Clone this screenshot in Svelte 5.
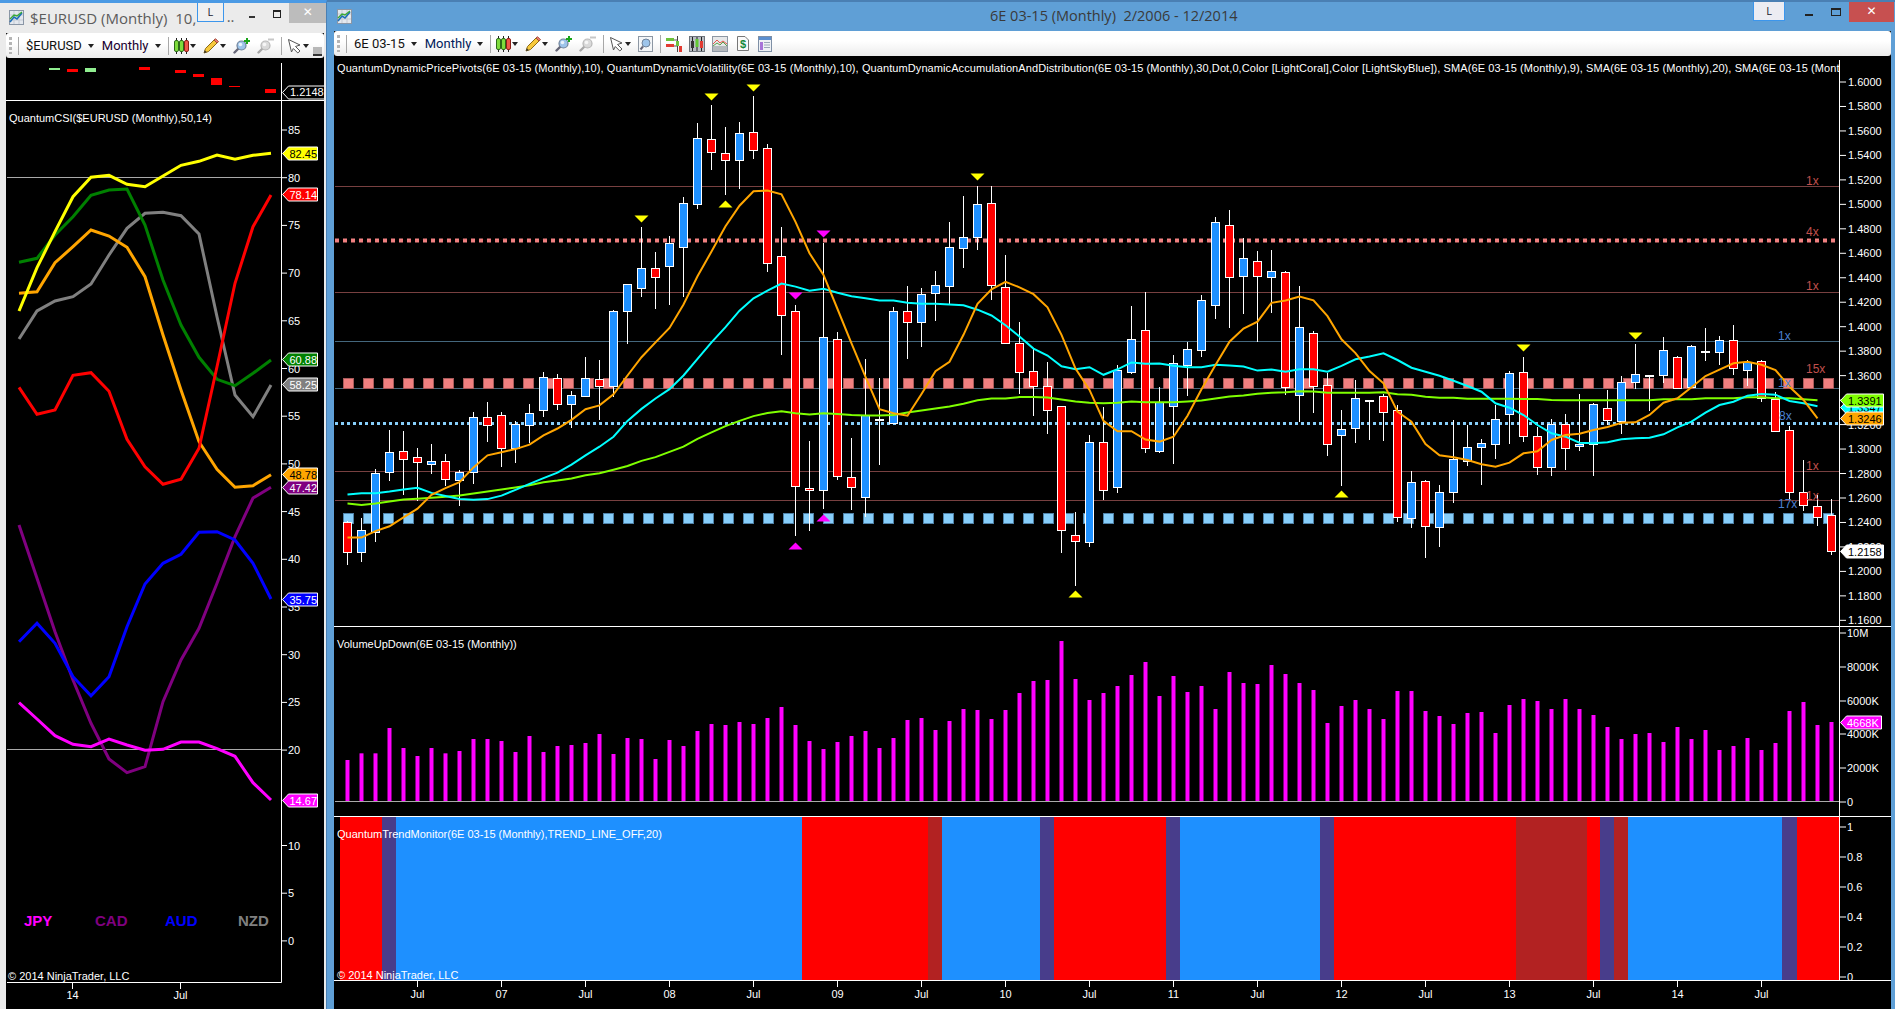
<script>
// reading a crop of the chart back to screen pixels: first 74 bars / last 33 bars
const ya = (z) => Math.round(80 + z / 2.904);
const yc = (z) => Math.round(300 + z / 3);
const barX = (i) => 347 + 14 * i;

// wick top, body top, body bottom, wick bottom, kind (b = up, r = down, d = doji)
const barsA = [
  [1280,1284,1372,1408,'r'],[1272,1308,1370,1400,'b'],[1130,1142,1312,1342,'b'],[1016,1081,1139,1164,'b'],
  [1019,1078,1100,1205,'r'],[1069,1096,1110,1222,'r'],[1057,1107,1114,1144,'b'],[1086,1107,1160,1180,'r'],
  [1132,1139,1163,1237,'b'],[965,978,1139,1173,'b'],[935,980,1003,1050,'r'],[965,974,1068,1124,'r'],
  [990,1000,1070,1112,'b'],[941,966,1003,1055,'b'],[848,863,957,979,'b'],[854,866,940,958,'r'],
  [903,916,940,1010,'b'],[804,866,917,920,'b'],[813,869,890,987,'r'],[668,672,890,920,'b'],
  [593,593,672,767,'b'],[427,547,603,630,'b'],[499,547,571,665,'r'],[453,474,539,653,'b'],
  [340,358,484,630,'b'],[125,167,359,375,'b'],[73,172,208,261,'r'],[136,213,231,334,'r'],
  [122,155,231,317,'b'],[46,152,202,229,'r'],[186,198,530,558,'r'],[427,512,681,799,'r'],
  [654,672,1178,1324,'r'],[1048,1186,1192,1310,'r'],[473,747,1190,1246,'b'],[732,753,1149,1161,'r'],
  [1040,1154,1181,1249,'r'],[810,972,1210,1269,'b'],[865,984,984,1118,'d'],[660,672,995,1000,'b'],
  [598,672,702,810,'r'],[604,622,702,775,'b'],[555,596,620,700,'b'],[412,486,597,650,'b'],
  [337,457,487,546,'b'],[308,361,455,494,'b'],[308,358,594,639,'r'],[508,600,763,763,'r'],
  [703,763,847,912,'r'],[780,846,888,976,'r'],[820,888,957,1028,'r'],[948,948,1308,1373,'r'],
  [1254,1322,1338,1469,'r'],[1032,1050,1341,1356,'b'],[950,1050,1190,1220,'r'],[828,843,1181,1199,'b'],
  [656,753,847,853,'b'],[617,727,1068,1083,'r'],[892,936,1076,1083,'b'],[799,823,946,1115,'b'],
  [761,782,827,918,'b'],[624,640,783,804,'b'],[398,413,652,694,'b'],[377,420,571,720,'r'],
  [460,518,568,679,'b'],[497,527,568,761,'r'],[494,556,571,677,'b'],[555,559,892,915,'r'],
  [598,716,916,994,'b'],[730,736,888,967,'r'],[850,885,1056,1092,'r'],[958,1014,1030,1179,'b'],
  [871,924,1012,1054,'b'],[928,928,928,1045,'d']
];
const barsC = [
  [283,289,335,423,'r'],[315,331,652,665,'r'],[513,547,655,684,'b'],[541,544,677,773,'r'],
  [555,577,680,740,'b'],[360,478,577,608,'b'],[375,442,483,498,'b'],[418,430,442,554,'b'],
  [315,358,431,476,'b'],[214,220,341,431,'b'],[171,217,409,426,'r'],[380,409,500,525,'r'],
  [358,373,502,527,'b'],[342,373,443,510,'r'],[283,431,438,453,'b'],[310,313,433,527,'b'],
  [270,325,361,375,'r'],[228,247,362,402,'b'],[132,223,247,267,'b'],[224,224,224,333,'d'],
  [111,151,224,249,'b'],[168,172,263,263,'r'],[135,139,260,262,'b'],[84,153,153,183,'d'],
  [108,121,155,195,'b'],[75,121,205,225,'r'],[180,185,209,258,'b'],[180,184,293,305,'r'],
  [275,297,392,392,'r'],[378,391,577,598,'r'],[480,577,616,633,'r'],[585,619,650,678,'r'],
  [597,646,754,765,'r']
];
const candles = [
  ...barsA.map(([a, b, c, d, k]) => ({ hi: ya(a), top: ya(b), bot: ya(c), lo: ya(d), k })),
  ...barsC.map(([a, b, c, d, k]) => ({ hi: yc(a), top: yc(b), bot: yc(c), lo: yc(d), k }))
];

function sma(a, c) {
  const ys = [...a.map((z) => 80 + z / 2.904), ...c.map((z) => 300 + z / 3)];
  return ys.map((y, i) => `${barX(i) + 0.5},${y.toFixed(1)}`).join(' ');
}

const smaOrange = sma(
  [1329,1329,1310,1296,1270,1245,1205,1185,1168,1125,1090,1081,1072,1059,1032,1012,987,956,945,913,858,805,762,720,652,570,498,425,365,323,321,332,412,503,566,665,765,
   862,956,968,975,912,846,818,740,650,608,586,602,622,660,740,838,900,990,1020,1020,1044,1050,1036,975,898,828,760,722,702,647,640,629,640,686,753,793,845],
  [250,335,365,432,466,472,480,493,500,488,460,454,420,405,401,390,381,368,367,345,308,295,262,228,209,190,185,194,210,260,300,355]
);
const smaCyan = sma(
  [1204,1200,1200,1195,1189,1184,1199,1208,1217,1219,1217,1207,1190,1173,1156,1140,1117,1090,1065,1036,990,955,925,898,858,810,762,718,670,634,612,591,600,612,606,618,628,
   634,640,640,647,650,650,652,654,667,684,712,745,780,800,831,840,834,856,840,820,824,823,830,834,834,827,829,832,844,841,847,840,840,847,830,811,803],
  [160,180,203,215,227,242,258,275,310,323,345,375,400,410,428,430,427,418,415,413,403,382,365,338,315,305,287,282,284,303,310,319]
);
const smaGreen = sma(
  [1230,1234,1230,1224,1218,1216,1213,1210,1207,1201,1195,1189,1183,1177,1168,1163,1157,1148,1142,1132,1121,1106,1095,1080,1065,1042,1023,1005,990,976,967,962,968,971,968,970,973,
   974,974,973,966,960,954,948,940,930,925,925,921,921,922,928,934,937,939,937,934,936,936,936,934,931,925,919,916,911,908,907,904,905,908,908,908,908],
  [277,283,284,290,293,293,296,296,296,296,297,297,300,301,301,301,301,301,301,301,298,298,298,295,295,295,292,292,295,295,298,301]
);

const triangles = [
  [21, ya(403), 'd', 'yellow'], [26, ya(48), 'd', 'yellow'], [29, ya(22), 'd', 'yellow'], [27, ya(360), 'u', 'yellow'],
  [32, ya(627), 'd', 'magenta'], [32, ya(1352), 'u', 'magenta'], [34, ya(446), 'd', 'magenta'], [34, ya(1273), 'u', 'magenta'],
  [45, ya(281), 'd', 'yellow'], [52, ya(1494), 'u', 'yellow'], [71, ya(1203), 'u', 'yellow'],
  [84, yc(143), 'd', 'yellow'], [92, yc(107), 'd', 'yellow']
];
function triPoints(i, y, dir) {
  const x = barX(i) + 0.5;
  return dir === 'd'
    ? `${x - 7},${y - 3.5} ${x + 7},${y - 3.5} ${x},${y + 3.5}`
    : `${x - 7},${y + 3.5} ${x + 7},${y + 3.5} ${x},${y - 3.5}`;
}

const pivotLines = [
  [186.5, '#784040'], [292.5, '#784040'], [341.5, '#44677d'], [388.5, '#44677d'], [471.5, '#784040'], [500.5, '#784040']
];
const squares = Array.from({ length: 75 }, (_, i) => 343 + 20 * i);
const pivotTags = [
  [1806, 185, '1x', '#c0504d'], [1806, 236, '4x', '#c0504d'], [1806, 290, '1x', '#c0504d'], [1778, 340, '1x', '#4b80d2'],
  [1806, 373, '15x', '#c0504d'], [1778, 387, '1x', '#4b80d2'], [1779, 420, '8x', '#4b80d2'], [1806, 470, '1x', '#c0504d'],
  [1806, 500, '1x', '#c0504d'], [1778, 508, '17x', '#4b80d2']
];

const priceTicks = Array.from({ length: 23 }, (_, i) => ({ y: 82 + i * 24.47, t: (1.6 - i * 0.02).toFixed(4) }));
const volTicks = [[633, '10M'], [667, '8000K'], [701, '6000K'], [734, '4000K'], [768, '2000K'], [802, '0']];
const trendTicks = [[827, '1'], [857, '0.8'], [887, '0.6'], [917, '0.4'], [947, '0.2'], [977, '0']];
const timeTicks = ['Jul', '07', 'Jul', '08', 'Jul', '09', 'Jul', '10', 'Jul', '11', 'Jul', '12', 'Jul', '13', 'Jul', '14', 'Jul'];

// bar tops, measured on the 3x crops
const volTop = [420,400,400,324,384,408,384,400,393,357,357,363,396,348,396,378,375,369,342,402,354,357,417,360,378,333,312,315,306,312,294,261,315,363,387,366,348,333,384,354,300,294,330,303,267,270,297,270,219,183,180,63,177,240,219,198,165,
  126,228,168,216,198,267,156,189,192,135,162,189,210,309,258,240,267,297,213,213,273,288,312,279,276,339,255,237,243,267,237,267,285,321,357,342,339,366,321,357,330,390,378,354,390,369,273,246,315,306];

const RED = '#ff0000', BLUE = '#1e90ff', SLATE = '#483d8b', BRICK = '#b22222';
const trend = [
  [340, 382, RED], [382, 396, SLATE], [396, 802, BLUE], [802, 928, RED], [928, 942, BRICK], [942, 1040, BLUE],
  [1040, 1054, SLATE], [1054, 1166, RED], [1166, 1180, SLATE], [1180, 1320, BLUE], [1320, 1334, SLATE], [1334, 1516, RED],
  [1516, 1587, BRICK], [1587, 1600, RED], [1600, 1614, SLATE], [1614, 1628, BRICK], [1628, 1782, BLUE], [1782, 1797, SLATE],
  [1797, 1839, RED]
];

// left window: currency strength
const csiX = (i) => 19 + 18 * i;
const csiLine = (pts, base) => pts.map((z, i) => `${csiX(i)},${(base + z / 3).toFixed(1)}`).join(' ');
const csi = [
  ['#808080', csiLine([717,633,603,590,552,465,385,340,337,347,402,650,885,950,855], 100)],
  ['#008000', csiLine([487,475,405,350,286,270,267,375,540,675,772,838,857,820,780], 100)],
  ['#ffa500', csiLine([580,575,488,440,390,408,442,530,705,870,1025,1108,1162,1157,1124], 100)],
  ['#ffff00', csiLine([633,503,395,290,232,226,253,260,228,196,184,165,178,166,160], 100)],
  ['#800080', csiLine([15,175,335,480,610,717,758,740,545,420,325,190,50,-66,-98], 520)],
  ['#0000ff', csiLine([365,310,370,470,527,470,320,192,130,103,37,35,60,130,237], 520)],
  ['#ff0000', csiLine([862,943,930,826,818,874,1018,1100,1153,1138,1045,800,550,380,285], 100)],
  ['#ff00ff', csiLine([548,597,647,673,680,657,675,691,688,666,666,686,709,788,840], 520)]
];
const csiTicks = [85, 80, 75, 70, 65, 60, 55, 50, 45, 40, 35, 30, 25, 20, 10, 5, 0];
const csiTickY = (v) => 130 + (85 - v) * 9.54;
const csiTags = [
  [153, '82.45', '#ffff00', '#000'], [194, '78.14', '#ff0000', '#fff'], [359, '60.88', '#008000', '#fff'],
  [384, '58.25', '#808080', '#fff'], [474, '48.78', '#ffa500', '#000'], [487, '47.42', '#800080', '#fff'],
  [599, '35.75', '#0000ff', '#fff'], [800, '14.67', '#ff00ff', '#fff']
];
const miniBars = [
  [49, 68, 70, '#90ee90'], [67, 69, 72, '#ff0000'], [85, 68, 72, '#90ee90'], [139, 67, 70, '#ff0000'], [175, 70, 73, '#ff0000'],
  [193, 74, 77, '#ff0000'], [211, 78, 85, '#ff0000'], [229, 86, 87, '#ff0000'], [265, 89, 93, '#ff0000']
];
const legend = [[24, 'JPY', '#ff00ff'], [95, 'CAD', '#800080'], [165, 'AUD', '#0000ff'], [238, 'NZD', '#808080']];

const tagPoints = (x, y, w) => `${x},${y} ${x + 6},${y - 6.5} ${x + w},${y - 6.5} ${x + w},${y + 6.5} ${x + 6},${y + 6.5}`;
</script>

{#snippet chartIcon()}
  <svg class="ic" width="15" height="15" viewBox="0 0 15 15">
    <rect x="0.5" y="0.5" width="14" height="14" fill="#e4e8ee" stroke="#8a96a6" />
    <path d="M1 5h13M1 10h13M5 1v13M10 1v13" stroke="#c3cad4" />
    <path d="M1 12 5 7l3 2 5-6" fill="none" stroke="#1d6fb8" stroke-width="1.6" />
    <path d="M1 9 5 5l3 1 5-4" fill="none" stroke="#39a935" stroke-width="1.4" />
  </svg>
{/snippet}

{#snippet candleIcon()}
  <svg class="ic" width="15" height="16" viewBox="0 0 15 16">
    <path d="M2.5 0v16M7.5 0v16M12.5 0v16" stroke="#222" />
    <rect x="0.5" y="2.5" width="4" height="11" rx="1.5" fill="#7fdc3c" stroke="#2c6b18" />
    <rect x="5.5" y="2.5" width="4" height="11" rx="1.5" fill="#7fdc3c" stroke="#2c6b18" />
    <rect x="10.5" y="2.5" width="4" height="11" rx="1.5" fill="#f0584a" stroke="#8c1f16" />
  </svg>
{/snippet}

{#snippet pencilIcon()}
  <svg class="ic" width="16" height="16" viewBox="0 0 16 16">
    <path d="M1 15 2.5 10.5 11 2l3 3-8.5 8.5Z" fill="#f7c93c" stroke="#8c6a14" />
    <path d="M11 2l1.5-1.3 3 3L14 5Z" fill="#ee7d6d" stroke="#a34a3c" />
    <path d="M1 15l.8-2.8 2 2Z" fill="#333" />
  </svg>
{/snippet}

{#snippet lensIcon(plus, dim)}
  <svg class="ic" class:dim width="17" height="16" viewBox="0 0 17 16">
    <path d="M1.5 14.5 6 10" stroke="#667" stroke-width="2.4" stroke-linecap="round" />
    <circle cx="8.5" cy="7.5" r="4.5" fill="#9dc4ea" stroke="#6f8299" stroke-width="1.2" />
    <circle cx="7.5" cy="6.5" r="1.8" fill="#e8f2fb" />
    {#if plus}
      <path d="M14 0v6M11 3h6" stroke="#1aa51a" stroke-width="2" />
    {:else}
      <path d="M11 1.5h6" stroke="#999" stroke-width="2" />
    {/if}
  </svg>
{/snippet}

{#snippet arrowIcon()}
  <svg class="ic" width="15" height="16" viewBox="0 0 15 16">
    <path d="M1.5 1.5 13 7 8.5 8.5 13 13l-2.200 2L6.300 10.5 4.500 14Z" fill="#fff" stroke="#555" />
  </svg>
{/snippet}

{#snippet caret()}
  <span class="caret"></span>
{/snippet}

{#snippet grip()}
  <span class="grip"></span><span class="sep"></span>
{/snippet}

<div class="desk">
  <section class="win side">
    <header class="title">
      <span class="titleicon">{@render chartIcon()}</span>
      <span class="caption">$EURUSD (Monthly)  10,</span>
      <span class="tab">L</span>
      <span class="caption dots">..</span>
      <span class="ctl min"></span>
      <span class="ctl max"></span>
      <span class="close">✕</span>
    </header>
    <div class="framed">
      <div class="barwrap">
        <div class="toolbar">
          {@render grip()}
          <span class="sym">$EURUSD</span>{@render caret()}
          <span class="sym per">Monthly</span>{@render caret()}
          <span class="sep"></span>
          {@render candleIcon()}{@render caret()}
          <span class="gap"></span>{@render pencilIcon()}{@render caret()}
          <span class="gap"></span>{@render lensIcon(true, false)}
          <span class="gap"></span>{@render lensIcon(false, true)}
          <span class="sep"></span>
          {@render arrowIcon()}{@render caret()}
          <span class="more"></span>
        </div>
      </div>
      <svg class="chart" width="318" height="951" viewBox="6 58 318 951">
        {#each miniBars as [x, top, bot, c]}
          <rect {x} y={top} width="11" height={bot - top} fill={c} />
        {/each}
        <polygon points={tagPoints(282.5, 92.5, 44)} fill="#000" stroke="#fff" />
        <text class="t" x="290" y="96">1.2148</text>
        <path class="frame" d="M6 100.5H324M281.5 63V982.5M7 982.5H281.5M72.5 983v6M180.5 983v6" />

        <line x1="7" x2="281" y1="177.5" y2="177.5" stroke="#a9a9a9" />
        <line x1="7" x2="281" y1="749.5" y2="749.5" stroke="#a9a9a9" />
        <text class="t lbl" x="9" y="122">QuantumCSI($EURUSD (Monthly),50,14)</text>

        {#each csi as [c, pts]}
          <polyline points={pts} fill="none" stroke={c} stroke-width="3" />
        {/each}

        {#each csiTicks as v}
          <path class="frame" d="M282 {csiTickY(v)}h5" />
          <text class="t lbl" x="288" y={csiTickY(v) + 4}>{v}</text>
        {/each}
        {#each csiTags as [y, t, bg, fg]}
          <polygon points={tagPoints(282.5, y + 0.5, 35)} fill={bg} stroke="#fff" />
          <text class="t lbl" x="289.5" y={y + 4.5} style:fill={fg}>{t}</text>
        {/each}
        {#each legend as [x, t, c]}
          <text class="leg" {x} y="926" fill={c}>{t}</text>
        {/each}
        <text class="t lbl" x="8" y="980">© 2014 NinjaTrader, LLC</text>
        <text class="t lbl mid" x="72.5" y="999">14</text>
        <text class="t lbl mid" x="180.5" y="999">Jul</text>
      </svg>
    </div>
  </section>

  <section class="win main">
    <header class="title">
      <span class="titleicon">{@render chartIcon()}</span>
      <span class="caption wide">6E 03-15 (Monthly)  2/2006 - 12/2014</span>
      <span class="tab">L</span>
      <span class="ctl min"></span>
      <span class="ctl max"></span>
      <span class="close">✕</span>
    </header>
    <div class="framed">
      <div class="barwrap">
        <div class="toolbar">
          {@render grip()}
          <span class="sym">6E 03-15</span>{@render caret()}
          <span class="sym per">Monthly</span>{@render caret()}
          <span class="sep"></span>
          {@render candleIcon()}{@render caret()}
          <span class="gap"></span>{@render pencilIcon()}{@render caret()}
          <span class="gap"></span>{@render lensIcon(true, false)}
          <span class="gap"></span>{@render lensIcon(false, true)}
          <span class="sep"></span>
          {@render arrowIcon()}{@render caret()}
          <span class="gap"></span>
          <svg class="ic" width="15" height="16" viewBox="0 0 15 16">
            <rect x="0.5" y="0.5" width="14" height="15" fill="#f4f6f8" stroke="#8d97a3" />
            <circle cx="8" cy="7" r="4" fill="#9dc4ea" stroke="#6f8299" />
            <path d="M2.5 13.5 5 10.5" stroke="#667" stroke-width="2" />
          </svg>
          <span class="sep"></span>
          <svg class="ic" width="16" height="16" viewBox="0 0 16 16">
            <path d="M11.5 0v16" stroke="#444" />
            <rect x="0" y="2" width="8" height="3" fill="#6cc23a" />
            <rect x="8" y="3.5" width="3" height="1" fill="#555" />
            <rect x="0" y="8" width="8" height="3" fill="#e23a30" />
            <rect x="8" y="9.5" width="3" height="1" fill="#555" />
            <rect x="10" y="5" width="3" height="5" fill="#6cc23a" />
            <rect x="13" y="10" width="3" height="6" fill="#e23a30" />
          </svg>
          <span class="gap"></span>
          <svg class="ic" width="16" height="16" viewBox="0 0 16 16">
            <rect x="0.5" y="0.5" width="15" height="15" fill="#b9bec4" stroke="#6d737a" />
            <path d="M3.5 1v14M8 1v14M12.5 1v14" stroke="#222" />
            <rect x="2" y="5" width="3" height="7" fill="#333" />
            <rect x="6.5" y="3" width="3" height="8" fill="#62c934" />
            <rect x="11" y="5" width="3" height="7" fill="#e23a30" />
          </svg>
          <span class="gap"></span>
          <svg class="ic" width="16" height="16" viewBox="0 0 16 16">
            <rect x="0.5" y="0.5" width="15" height="15" fill="#e6e8ea" stroke="#8d97a3" />
            <rect x="1" y="10" width="14" height="5" fill="#b5b9bd" />
            <path d="M1 8 5 4l3 3 3-2 4 3" fill="none" stroke="#e2574c" />
            <path d="M1 10 5 7l3 2 3-3 4 4" fill="none" stroke="#5aa34c" />
          </svg>
          <span class="gap wide"></span>
          <svg class="ic" width="12" height="15" viewBox="0 0 12 15">
            <path d="M.5.5H8L11.5 4V14.5H.5Z" fill="#fafafa" stroke="#777" />
            <text class="dollar" x="6" y="12" text-anchor="middle">$</text>
          </svg>
          <span class="gap wide"></span>
          <svg class="ic" width="14" height="16" viewBox="0 0 14 16">
            <rect x="0.5" y="0.5" width="13" height="15" fill="#eef1f5" stroke="#7e8fa5" />
            <rect x="1" y="1" width="12" height="3" fill="#5b8fd0" />
            <rect x="2" y="6" width="3" height="8" fill="#a774d8" />
            <path d="M6 6.5h6M6 9h6M6 11.5h6" stroke="#9aa7b8" />
          </svg>
        </div>
      </div>
      <svg class="chart" width="1557" height="953" viewBox="334 56 1557 953">
        <text class="t lbl head" x="337" y="72">QuantumDynamicPricePivots(6E 03-15 (Monthly),10), QuantumDynamicVolatility(6E 03-15 (Monthly),10), QuantumDynamicAccumulationAndDistribution(6E 03-15 (Monthly),30,Dot,0,Color [LightCoral],Color [LightSkyBlue]), SMA(6E 03-15 (Monthly),9), SMA(6E 03-15 (Monthly),20), SMA(6E 03-15 (Monthly),50)</text>
        <rect x="1839" y="56" width="52" height="22" fill="#000" />

        {#each pivotLines as [y, c]}
          <line x1="335" x2="1839" y1={y} y2={y} stroke={c} />
        {/each}
        <line x1="335" x2="1839" y1="240.5" y2="240.5" stroke="#f08080" stroke-width="4" stroke-dasharray="4 4" />
        <line x1="335" x2="1839" y1="423.5" y2="423.5" stroke="#87cefa" stroke-width="3" stroke-dasharray="3 3" />
        {#each squares as x}
          <rect class="sq coral" x={x + 0.5} y="378.5" width="10" height="10" />
          <rect class="sq sky" x={x + 0.5} y="513.5" width="10" height="10" />
        {/each}

        {#each candles as c, i}
          <rect class="wick" x={barX(i)} y={c.hi} width="1" height={c.lo - c.hi} />
          {#if c.k === 'd'}
            <rect class="wick" x={barX(i) - 4} y={c.top} width="9" height="2" />
          {:else}
            <rect class="body" class:up={c.k === 'b'} x={barX(i) - 3.5} y={c.top + 0.5} width="8" height={Math.max(c.bot - c.top, 1)} />
          {/if}
        {/each}

        <polyline class="sma" points={smaGreen} stroke="#7fff00" />
        <polyline class="sma" points={smaCyan} stroke="#00ffff" />
        <polyline class="sma" points={smaOrange} stroke="#ffa500" />

        {#each triangles as [i, y, dir, c]}
          <polygon points={triPoints(i, y, dir)} fill={c} />
        {/each}
        {#each pivotTags as [x, y, t, c]}
          <text class="ptag" {x} {y} fill={c}>{t}</text>
        {/each}

        <text class="t lbl" x="337" y="648">VolumeUpDown(6E 03-15 (Monthly))</text>
        {#each volTop as z, i}
          <rect x={barX(i) - 1.5} y={620 + z / 3} width="4" height={801 - (620 + z / 3)} fill="#ff00ff" />
        {/each}
        <line x1="335" x2="1839" y1="801.5" y2="801.5" stroke="#a9a9a9" />

        {#each trend as [a, b, c]}
          <rect x={a} y="817" width={b - a} height="163" fill={c} />
        {/each}
        <text class="t lbl" x="337" y="838">QuantumTrendMonitor(6E 03-15 (Monthly),TREND_LINE_OFF,20)</text>
        <text class="t lbl" x="337" y="979">© 2014 NinjaTrader, LLC</text>

        <path class="frame" d="M334 626.5H1891M334 816.5H1891M334 980.5H1891M1839.5 60V981" />
        {#each priceTicks as p}
          <path class="frame" d="M1840 {p.y}h6" />
          <text class="t lbl" x="1848" y={p.y + 4}>{p.t}</text>
        {/each}
        {#each volTicks as [y, t]}
          <path class="frame" d="M1840 {y}h6" />
          <text class="t lbl" x="1847" y={y + 4}>{t}</text>
        {/each}
        {#each trendTicks as [y, t]}
          <path class="frame" d="M1840 {y}h6" />
          <text class="t lbl" x="1847" y={y + 4}>{t}</text>
        {/each}
        {#each timeTicks as t, i}
          <path class="frame" d="M{417.5 + 84 * i} 981v6" />
          <text class="t lbl mid" x={417.5 + 84 * i} y="998">{t}</text>
        {/each}

        <polygon points={tagPoints(1840.5, 407.5, 43)} fill="#00ffff" stroke="#fff" />
        <text class="t lbl ink" x="1848" y="412">1.3347</text>
        <polygon points={tagPoints(1840.5, 400.5, 43)} fill="#7fff00" stroke="#fff" />
        <text class="t lbl ink" x="1848" y="405">1.3391</text>
        <polygon points={tagPoints(1840.5, 418.5, 43)} fill="#ffa500" stroke="#fff" />
        <text class="t lbl ink" x="1848" y="423">1.3246</text>
        <polygon points={tagPoints(1840.5, 551.5, 43)} fill="#fff" stroke="#fff" />
        <text class="t lbl ink" x="1848" y="556">1.2158</text>
        <polygon points={tagPoints(1840.5, 722.5, 41)} fill="#ff00ff" stroke="#fff" />
        <text class="t lbl" x="1847" y="727">4668K</text>
      </svg>
    </div>
  </section>
</div>

<style>
  :global(body) {
    margin: 0;
    background: #000;
    overflow: hidden;
  }

  .desk {
    display: flex;
    height: 1009px;
    overflow: hidden;
    font-family: "Open Sans", sans-serif;
  }

  .win {
    display: flex;
    flex-direction: column;
  }

  .side {
    width: 326px;
    background: #ebebeb;
    border-top: 3px solid #4b9ae4;
    border-right: 1px solid #4a7fb3;
  }

  .main {
    flex: 1;
    background: #5f9fd6;
    border-top: 2px solid #4a7fb3;
  }

  .title {
    display: flex;
    align-items: flex-start;
    height: 30px;
    flex: none;
  }

  .main .title {
    height: 29px;
  }

  .titleicon {
    display: block;
    margin: 7px 0 0 9px;
    height: 15px;
  }

  .main .titleicon {
    margin: 7px 0 0 10px;
  }

  .caption {
    font-size: 15px;
    line-height: 30px;
    color: #5c5c5c;
    white-space: pre;
    margin-left: 6px;
  }

  .caption.wide {
    margin-left: 638px;
    color: #3a3a3a;
    font-size: 14.5px;
    line-height: 28px;
  }

  .caption.dots {
    margin-left: 3px;
    line-height: 26px;
  }

  .tab {
    width: 32px;
    height: 19px;
    margin-left: 1px;
    background: #f0f0f0;
    border: 1px solid #3c96ec;
    border-top: none;
    box-sizing: border-box;
    font-size: 11px;
    line-height: 17px;
    text-align: center;
    color: #223;
  }

  .main .tab {
    margin-left: auto;
    background: #ececf2;
  }

  .ctl {
    display: block;
    box-sizing: border-box;
  }

  .side .min {
    width: 8px;
    height: 2px;
    margin: 13px 0 0 14px;
    background: #333;
  }

  .side .max {
    width: 10px;
    height: 8px;
    margin: 7px 0 0 18px;
    border: 1px solid #222;
    border-top-width: 2px;
  }

  .main .min {
    width: 8px;
    height: 2px;
    margin: 12px 0 0 20px;
    background: #222;
  }

  .main .max {
    width: 10px;
    height: 8px;
    margin: 6px 0 0 18px;
    border: 1px solid #222;
    border-top-width: 2px;
  }

  .close {
    width: 45px;
    height: 20px;
    margin-left: 8px;
    background: #bcbcbc;
    color: #fff;
    font-size: 12px;
    line-height: 19px;
    text-align: center;
    font-family: "DejaVu Sans", sans-serif;
  }

  .main .close {
    margin: 0 1px 0 8px;
    background: #c75050;
  }

  .framed {
    flex: 1;
    display: flex;
    flex-direction: column;
    padding: 0 2px 0 6px;
    min-height: 0;
  }

  .main .framed {
    padding: 0 4px 0 7px;
  }

  .barwrap {
    flex: none;
    background: #000;
  }

  .toolbar {
    display: flex;
    align-items: center;
    height: 25px;
    padding-left: 3px;
    background: linear-gradient(#fff 40%, #ececec);
    border-radius: 3px;
    position: relative;
    color: #111;
  }

  .grip {
    width: 3px;
    height: 17px;
    background: repeating-linear-gradient(#b5b5b5 0 3px, transparent 3px 5px);
  }

  .sep {
    width: 1px;
    height: 18px;
    margin: 0 5px 0 7px;
    background: #a8a8a8;
  }

  .grip + .sep {
    margin: 0 7px 0 6px;
  }

  .sym {
    font-family: Roboto, sans-serif;
    font-size: 13px;
    white-space: nowrap;
  }

  .per {
    margin-left: 8px;
    color: #200030;
  }

  .main .per {
    color: #00205a;
  }

  .caret {
    width: 0;
    height: 0;
    margin: 0 0 0 6px;
    border: 3px solid transparent;
    border-top: 4px solid #222;
    border-bottom: none;
  }

  .ic + .caret {
    margin-left: 1px;
  }

  .gap {
    width: 7px;
  }

  .gap.wide {
    width: 9px;
  }

  .ic {
    display: block;
    flex: none;
  }

  .ic.dim {
    filter: grayscale(1) opacity(0.55);
  }

  .more {
    position: absolute;
    right: 2px;
    bottom: 2px;
    width: 9px;
    height: 9px;
    background: #b8b8b8;
    border-bottom: 2px solid #333;
    box-sizing: border-box;
  }

  .dollar {
    font: bold 11px "Liberation Sans", sans-serif;
    fill: #14883a;
  }

  .chart {
    display: block;
    flex: none;
    background: #000;
  }

  .t {
    font-family: "Liberation Sans", Arial, sans-serif;
    font-size: 11px;
    fill: #fff;
  }

  .head {
    letter-spacing: 0.09px;
  }

  .ink {
    fill: #000;
  }

  .lbl {
    white-space: pre;
  }

  .mid {
    text-anchor: middle;
  }

  .leg {
    font: bold 15px "Liberation Sans", Arial, sans-serif;
  }

  .ptag {
    font: 12px "Liberation Sans", Arial, sans-serif;
  }

  .frame {
    fill: none;
    stroke: #fff;
    stroke-width: 1;
  }

  .sq {
    stroke-width: 1;
  }

  .coral {
    fill: #f08080;
    stroke: #a85a5a;
  }

  .sky {
    fill: #87cefa;
    stroke: #4f82a8;
  }

  .wick {
    fill: #fff;
  }

  .body {
    fill: #ff0000;
    stroke: #fff;
    stroke-width: 1;
  }

  .body.up {
    fill: #1e90ff;
  }

  .sma {
    fill: none;
    stroke-width: 2;
  }
</style>
